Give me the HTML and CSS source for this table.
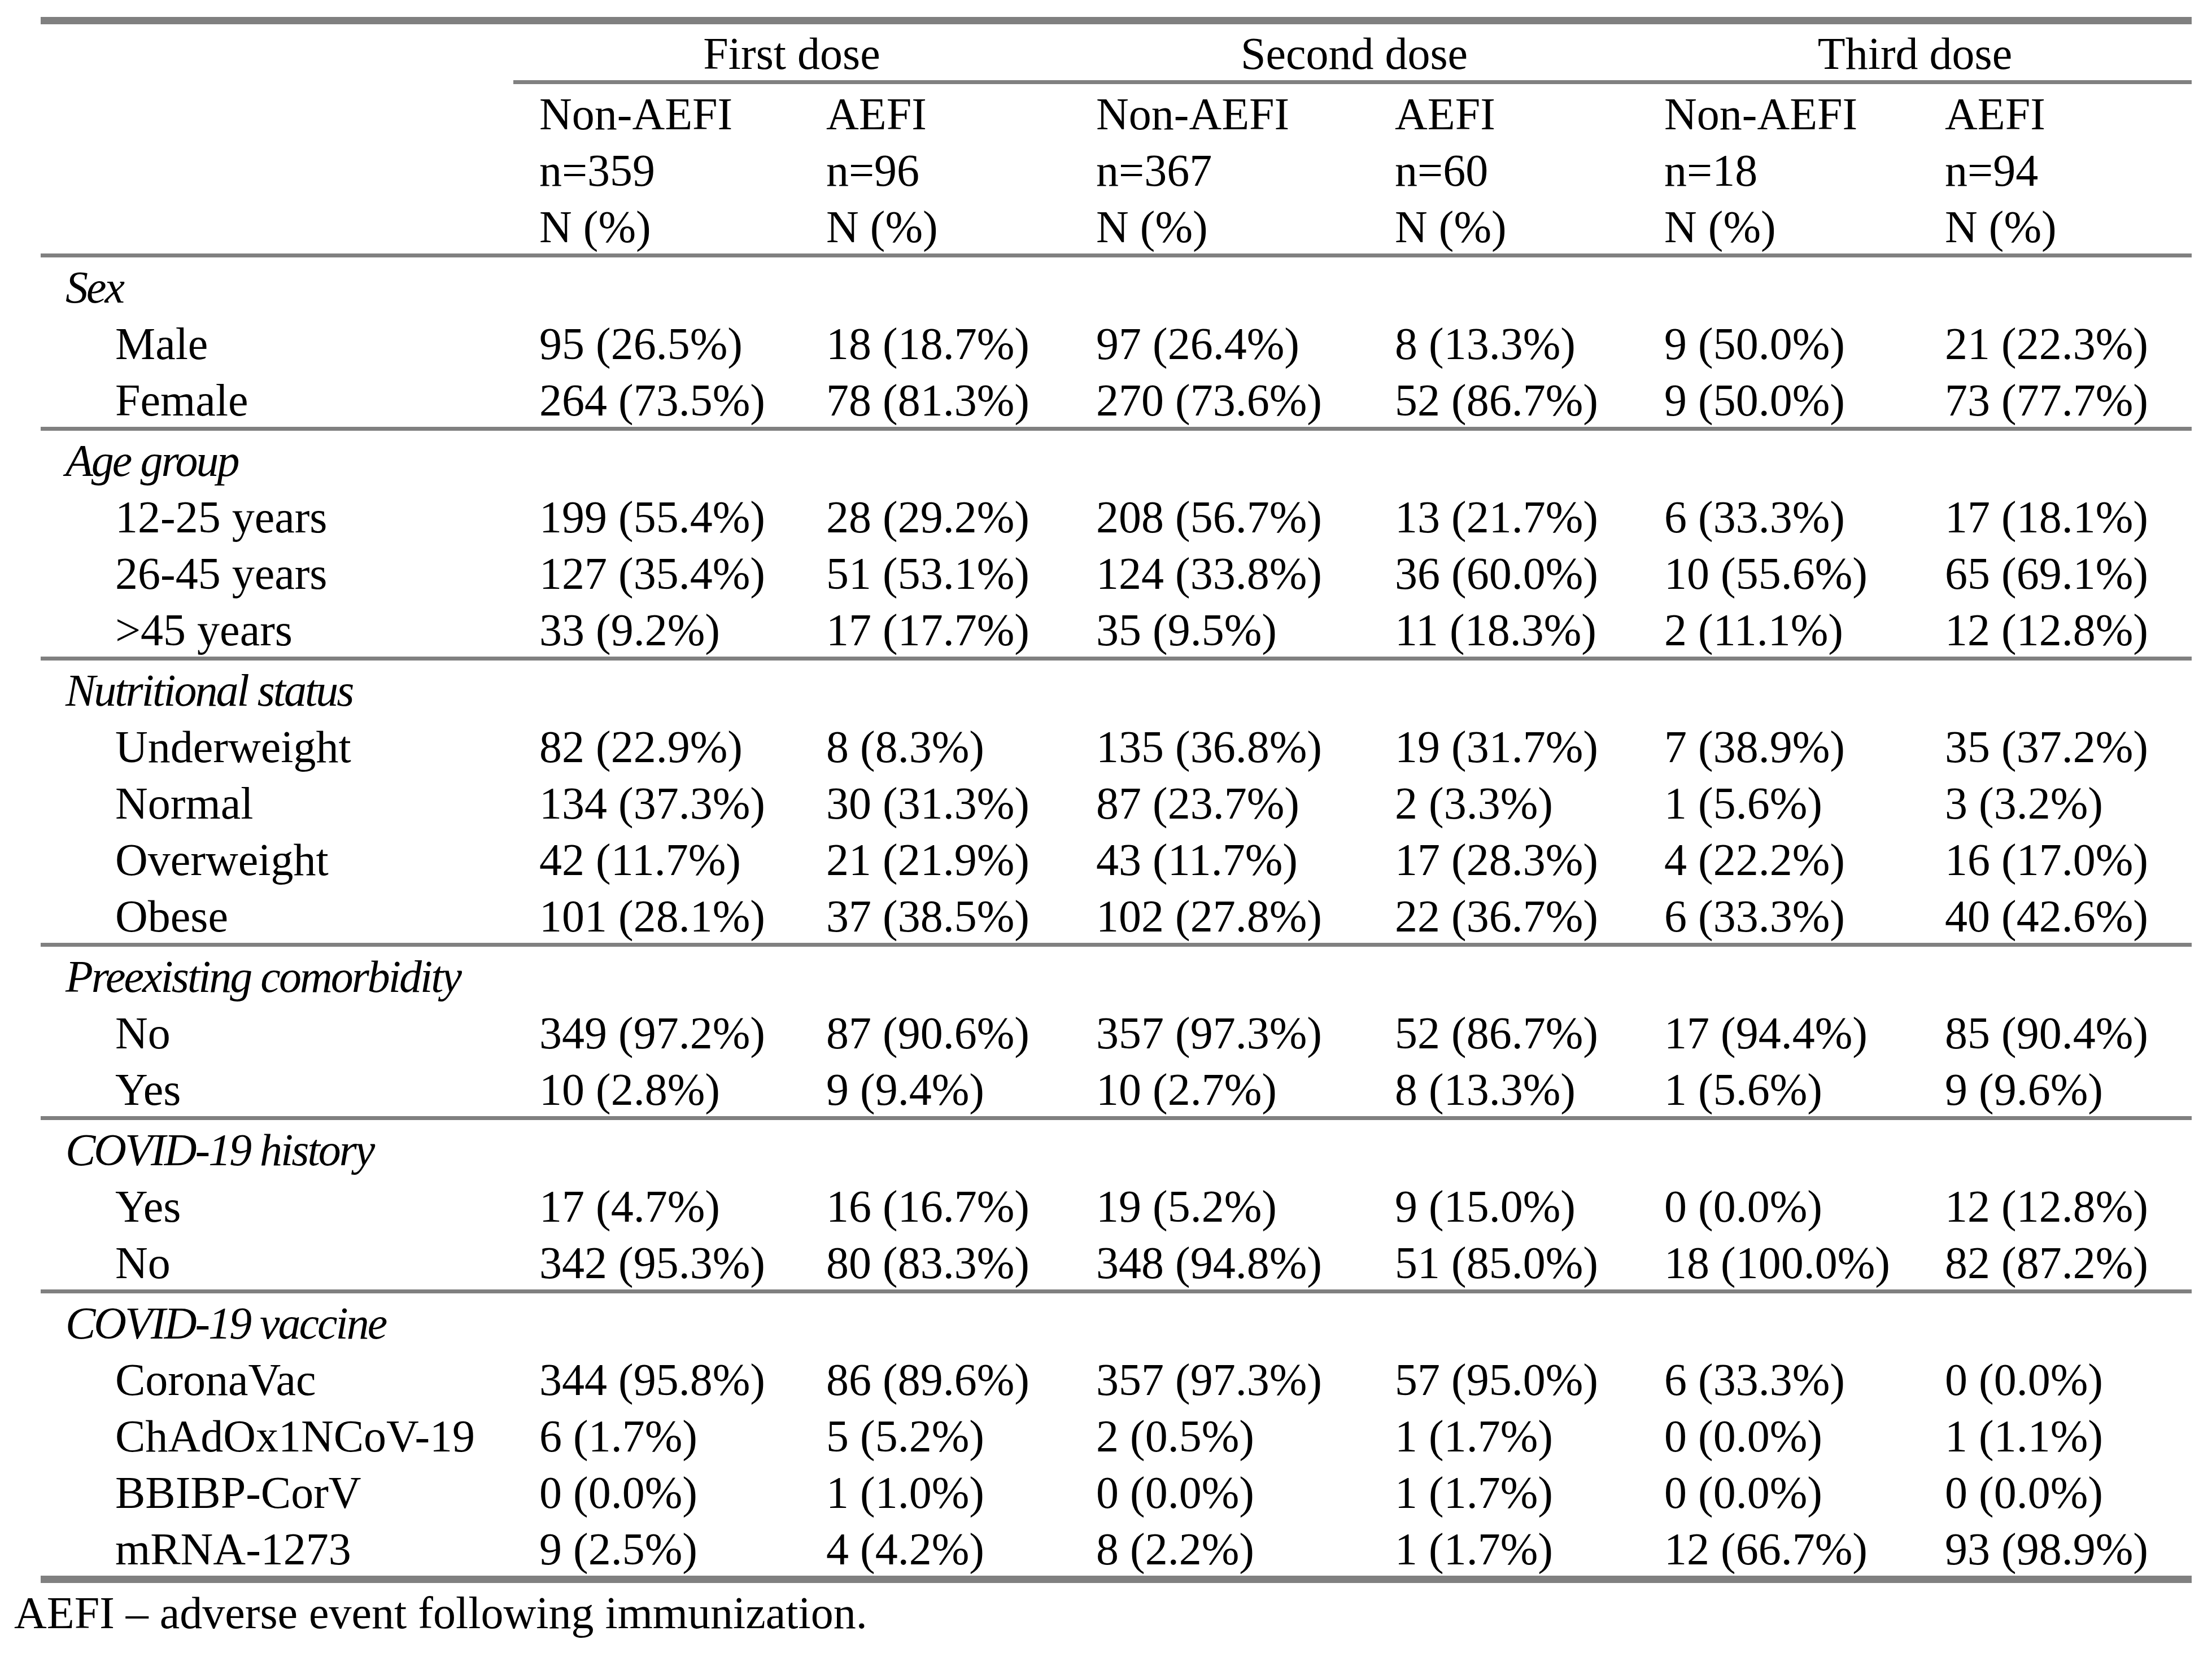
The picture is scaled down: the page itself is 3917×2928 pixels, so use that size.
FILE: index.html
```html
<!DOCTYPE html>
<html lang="en">
<head>
<meta charset="utf-8">
<title>AEFI table</title>
<link rel="stylesheet" href="styles.css">
</head>
<body>
<div class="page">
<table class="stats">
  <colgroup>
    <col class="c-label"><col class="c1"><col class="c2"><col class="c3"><col class="c4"><col class="c5"><col class="c6">
  </colgroup>
  <thead>
    <tr class="h-group">
      <th class="blank"></th>
      <th class="group" colspan="2">First dose</th>
      <th class="group" colspan="2">Second dose</th>
      <th class="group" colspan="2">Third dose</th>
    </tr>
    <tr class="h-sub">
      <th class="blank"></th><th>Non-AEFI</th><th>AEFI</th><th>Non-AEFI</th><th>AEFI</th><th>Non-AEFI</th><th>AEFI</th>
    </tr>
    <tr class="h-sub">
      <th class="blank"></th><th>n=359</th><th>n=96</th><th>n=367</th><th>n=60</th><th>n=18</th><th>n=94</th>
    </tr>
    <tr class="h-sub h-last">
      <th class="blank"></th><th>N (%)</th><th>N (%)</th><th>N (%)</th><th>N (%)</th><th>N (%)</th><th>N (%)</th>
    </tr>
  </thead>
  <tbody>
    <tr class="cat first"><td class="cat-label">Sex</td><td></td><td></td><td></td><td></td><td></td><td></td></tr>
    <tr><td class="sub">Male</td><td>95 (26.5%)</td><td>18 (18.7%)</td><td>97 (26.4%)</td><td>8 (13.3%)</td><td>9 (50.0%)</td><td>21 (22.3%)</td></tr>
    <tr><td class="sub">Female</td><td>264 (73.5%)</td><td>78 (81.3%)</td><td>270 (73.6%)</td><td>52 (86.7%)</td><td>9 (50.0%)</td><td>73 (77.7%)</td></tr>

    <tr class="cat"><td class="cat-label">Age group</td><td></td><td></td><td></td><td></td><td></td><td></td></tr>
    <tr><td class="sub">12-25 years</td><td>199 (55.4%)</td><td>28 (29.2%)</td><td>208 (56.7%)</td><td>13 (21.7%)</td><td>6 (33.3%)</td><td>17 (18.1%)</td></tr>
    <tr><td class="sub">26-45 years</td><td>127 (35.4%)</td><td>51 (53.1%)</td><td>124 (33.8%)</td><td>36 (60.0%)</td><td>10 (55.6%)</td><td>65 (69.1%)</td></tr>
    <tr><td class="sub">&gt;45 years</td><td>33 (9.2%)</td><td>17 (17.7%)</td><td>35 (9.5%)</td><td>11 (18.3%)</td><td>2 (11.1%)</td><td>12 (12.8%)</td></tr>

    <tr class="cat"><td class="cat-label">Nutritional status</td><td></td><td></td><td></td><td></td><td></td><td></td></tr>
    <tr><td class="sub">Underweight</td><td>82 (22.9%)</td><td>8 (8.3%)</td><td>135 (36.8%)</td><td>19 (31.7%)</td><td>7 (38.9%)</td><td>35 (37.2%)</td></tr>
    <tr><td class="sub">Normal</td><td>134 (37.3%)</td><td>30 (31.3%)</td><td>87 (23.7%)</td><td>2 (3.3%)</td><td>1 (5.6%)</td><td>3 (3.2%)</td></tr>
    <tr><td class="sub">Overweight</td><td>42 (11.7%)</td><td>21 (21.9%)</td><td>43 (11.7%)</td><td>17 (28.3%)</td><td>4 (22.2%)</td><td>16 (17.0%)</td></tr>
    <tr><td class="sub">Obese</td><td>101 (28.1%)</td><td>37 (38.5%)</td><td>102 (27.8%)</td><td>22 (36.7%)</td><td>6 (33.3%)</td><td>40 (42.6%)</td></tr>

    <tr class="cat"><td class="cat-label">Preexisting comorbidity</td><td></td><td></td><td></td><td></td><td></td><td></td></tr>
    <tr><td class="sub">No</td><td>349 (97.2%)</td><td>87 (90.6%)</td><td>357 (97.3%)</td><td>52 (86.7%)</td><td>17 (94.4%)</td><td>85 (90.4%)</td></tr>
    <tr><td class="sub">Yes</td><td>10 (2.8%)</td><td>9 (9.4%)</td><td>10 (2.7%)</td><td>8 (13.3%)</td><td>1 (5.6%)</td><td>9 (9.6%)</td></tr>

    <tr class="cat"><td class="cat-label">COVID-19 history</td><td></td><td></td><td></td><td></td><td></td><td></td></tr>
    <tr><td class="sub">Yes</td><td>17 (4.7%)</td><td>16 (16.7%)</td><td>19 (5.2%)</td><td>9 (15.0%)</td><td>0 (0.0%)</td><td>12 (12.8%)</td></tr>
    <tr><td class="sub">No</td><td>342 (95.3%)</td><td>80 (83.3%)</td><td>348 (94.8%)</td><td>51 (85.0%)</td><td>18 (100.0%)</td><td>82 (87.2%)</td></tr>

    <tr class="cat"><td class="cat-label">COVID-19 vaccine</td><td></td><td></td><td></td><td></td><td></td><td></td></tr>
    <tr><td class="sub">CoronaVac</td><td>344 (95.8%)</td><td>86 (89.6%)</td><td>357 (97.3%)</td><td>57 (95.0%)</td><td>6 (33.3%)</td><td>0 (0.0%)</td></tr>
    <tr><td class="sub">ChAdOx1NCoV-19</td><td>6 (1.7%)</td><td>5 (5.2%)</td><td>2 (0.5%)</td><td>1 (1.7%)</td><td>0 (0.0%)</td><td>1 (1.1%)</td></tr>
    <tr><td class="sub">BBIBP-CorV</td><td>0 (0.0%)</td><td>1 (1.0%)</td><td>0 (0.0%)</td><td>1 (1.7%)</td><td>0 (0.0%)</td><td>0 (0.0%)</td></tr>
    <tr class="last"><td class="sub">mRNA-1273</td><td>9 (2.5%)</td><td>4 (4.2%)</td><td>8 (2.2%)</td><td>1 (1.7%)</td><td>12 (66.7%)</td><td>93 (98.9%)</td></tr>
  </tbody>
</table>
<p class="footnote">AEFI – adverse event following immunization.</p>
</div>
</body>
</html>
```

FILE: styles.css
```css
html, body {
  margin: 0;
  padding: 0;
  background: #ffffff;
}

body {
  color: #000000;
  font-family: "Liberation Serif", "Times New Roman", serif;
  font-size: 80px;
}

.page {
  padding: 30px 0 0 25px;
}

.stats {
  border-collapse: separate;
  border-spacing: 0;
  table-layout: fixed;
  width: 3809px;
  margin-left: 47px;
}

.c-label { width: 837px; }
.c1 { width: 508px; }
.c2 { width: 478px; }
.c3 { width: 529px; }
.c4 { width: 477px; }
.c5 { width: 497px; }
.c6 { width: 483px; }

.stats th,
.stats td {
  padding: 6px 0 0 46px;
  line-height: 94px;
  height: 94px;
  vertical-align: top;
  text-align: left;
  font-weight: normal;
  white-space: nowrap;
}

.h-group th {
  border-top: 13px solid #808080;
  padding-top: 5px;
}

.h-group th.group {
  text-align: center;
  padding-left: 0;
  border-bottom: 7px solid #808080;
}

.h-last th {
  border-bottom: 7px solid #808080;
}

.stats td.cat-label {
  font-style: italic;
  padding-left: 44px;
  letter-spacing: -3px;
}

.cat td {
  border-top: 7px solid #808080;
}

.cat.first td {
  border-top: 0;
}

.stats td.sub {
  padding-left: 132px;
}

.last td {
  border-bottom: 13px solid #808080;
}

.footnote {
  margin: 0;
  padding-top: 6px;
  line-height: 94px;
}
```
